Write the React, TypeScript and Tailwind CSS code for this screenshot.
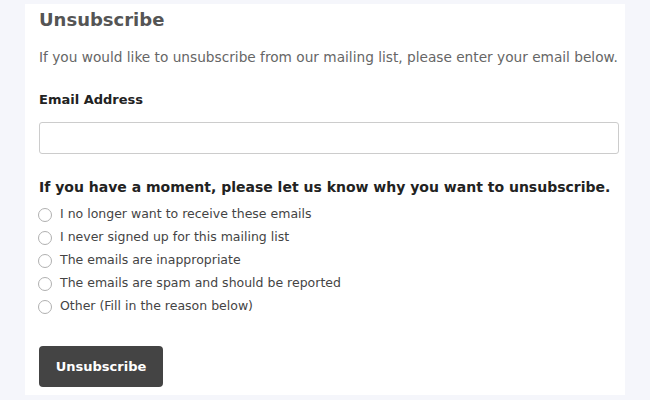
import React from "react";

const reasons = [
  "I no longer want to receive these emails",
  "I never signed up for this mailing list",
  "The emails are inappropriate",
  "The emails are spam and should be reported",
  "Other (Fill in the reason below)",
];

export default function App() {
  return (
    <div className="w-[650px] h-[400px] bg-[#f5f6fb] pt-[4px] pl-[25px] overflow-hidden" style={{ fontFamily: '"DejaVu Sans", Verdana, sans-serif' }}>
      <div className="w-[600px] h-[391px] bg-white px-[14px] pt-[3px]">
        <h1 className="text-[18px] font-bold text-[#555] leading-[26px]">Unsubscribe</h1>
        <p className="mt-[15px] text-[13.7px] text-[#666] leading-[18px] whitespace-nowrap">
          If you would like to unsubscribe from our mailing list, please enter your email below.
        </p>
        <label className="block mt-[25px] text-[13px] font-bold text-[#222] leading-[18px]">Email Address</label>
        <input className="block mt-[13px] w-[580px] h-[32px] border border-[#ccc] rounded-[3px] outline-none" />
        <p className="mt-[24px] text-[14px] font-bold text-[#222] leading-[18px] whitespace-nowrap">
          If you have a moment, please let us know why you want to unsubscribe.
        </p>
        <div className="mt-[7px] flex flex-col">
          {reasons.map((r) => (
            <label key={r} className="flex items-center h-[23px] text-[12.5px] text-[#444] whitespace-nowrap">
              <span className="w-[14px] h-[14px] rounded-full border border-[#b0b0b0] bg-white mr-[8px] ml-[-1px]" />
              {r}
            </label>
          ))}
        </div>
        <button className="mt-[28px] w-[124px] h-[41px] bg-[#444] rounded-[4px] text-white text-[13px] font-bold">
          Unsubscribe
        </button>
      </div>
    </div>
  );
}
